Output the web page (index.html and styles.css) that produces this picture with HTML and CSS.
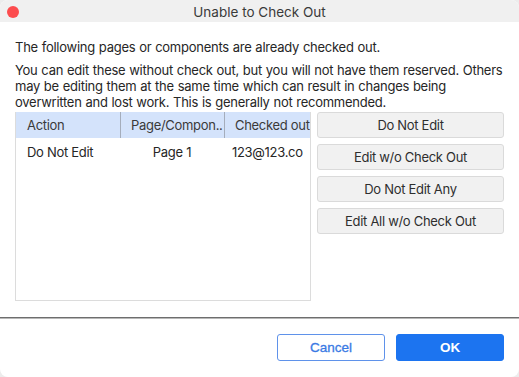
FILE: index.html
```html
<!DOCTYPE html>
<html>
<head>
<meta charset="utf-8">
<link rel="stylesheet" href="styles.css">
</head>
<body>
<div class="window">
  <div class="titlebar">
    <span class="close"></span>
    <span class="title">Unable to Check Out</span>
  </div>
  <div class="content">
    <p class="msg first">The following pages or components are already checked out.</p>
    <p class="msg">You can edit these without check out, but you will not have them reserved. Others may be editing them at the same time which can result in changes being overwritten and lost work. This is generally not recommended.</p>
    <div class="main">
      <div class="table">
        <div class="thead">
          <div class="cell c1">Action</div>
          <div class="cell c2 sep">Page/Compon..</div>
          <div class="cell c3 sep">Checked out</div>
        </div>
        <div class="row">
          <div class="cell c1">Do Not Edit</div>
          <div class="cell c2 center">Page 1</div>
          <div class="cell c3">123@123.co</div>
        </div>
      </div>
      <div class="actions">
        <button class="btn">Do Not Edit</button>
        <button class="btn">Edit w/o Check Out</button>
        <button class="btn">Do Not Edit Any</button>
        <button class="btn">Edit All w/o Check Out</button>
      </div>
    </div>
  </div>
  <div class="divider"></div>
  <div class="footer">
    <button class="fbtn cancel">Cancel</button>
    <button class="fbtn ok">OK</button>
  </div>
</div>
</body>
</html>
```
FILE: styles.css
```css
html, body {
  margin: 0;
  padding: 0;
  background: #ececec;
}
.window {
  width: 519px;
  height: 377px;
  background: #ffffff;
  border-radius: 8px;
  overflow: hidden;
  font-family: Inter, "Liberation Sans", sans-serif;
  font-size: 13px;
  color: #262626;
  display: flex;
  flex-direction: column;
}
.titlebar {
  height: 22px;
  background: #f0f0f0;
  position: relative;
  display: flex;
  align-items: center;
  justify-content: center;
  flex-shrink: 0;
}
.close {
  position: absolute;
  left: 7px;
  top: 6px;
  width: 12px;
  height: 12px;
  border-radius: 50%;
  background: #fc4c4e;
}
.title {
  font-size: 13.5px;
  color: #3a3a3a;
  padding-top: 2px;
}
.content {
  padding: 17px 15px 0 15px;
}
.msg {
  margin: 0;
  line-height: 16px;
  font-size: 13px;
  letter-spacing: -0.25px;
  word-spacing: 0.4px;
}
.msg.first {
  margin-bottom: 7px;
}
.main {
  display: flex;
  gap: 6px;
  margin-top: 2px;
}
.table {
  width: 294px;
  height: 188px;
  border: 1px solid #dcdcdc;
  border-top: none;
  flex-shrink: 0;
  letter-spacing: -0.3px;
}
.thead {
  display: flex;
  height: 26px;
  background: #d4e3fb;
  align-items: center;
  color: #3a3a3a;
}
.row {
  display: flex;
  height: 28px;
  align-items: center;
}
.cell {
  white-space: nowrap;
  overflow: hidden;
  box-sizing: border-box;
}
.c1 { width: 104px; padding-left: 11px; }
.c2 { width: 104px; padding-left: 10px; }
.c3 { width: 86px; padding-left: 8px; }
.thead .c3 { padding-left: 10px; }
.center { text-align: center; padding-left: 0; }
.sep {
  border-left: 1px solid #a5adbb;
  height: 26px;
  line-height: 26px;
}
.actions {
  display: flex;
  flex-direction: column;
  gap: 6px;
  width: 187px;
}
.btn {
  height: 26px;
  background: #f1f1f1;
  border: 1px solid #dadada;
  border-radius: 3px;
  font-family: Inter, "Liberation Sans", sans-serif;
  font-size: 13px;
  letter-spacing: -0.3px;
  color: #2e2e2e;
  padding: 0;
}
.divider {
  margin-top: 16px;
  height: 1px;
  background: #6e6e6e;
  border-bottom: 1px solid #b8b8b8;
}
.footer {
  display: flex;
  justify-content: flex-end;
  gap: 11px;
  padding: 15px 15px 0 0;
}
.fbtn {
  width: 108px;
  height: 27px;
  border-radius: 3px;
  font-family: "Liberation Sans", Arial, sans-serif;
  font-size: 13.5px;
  font-weight: bold;
  padding: 0;
}
.cancel {
  background: #ffffff;
  border: 1px solid #5f92ea;
  color: #3a7ae4;
  font-weight: normal;
  -webkit-text-stroke: 0.3px #3a7ae4;
}
.ok {
  background: #1c74f0;
  border: 1px solid #1c74f0;
  color: #ffffff;
}
```
